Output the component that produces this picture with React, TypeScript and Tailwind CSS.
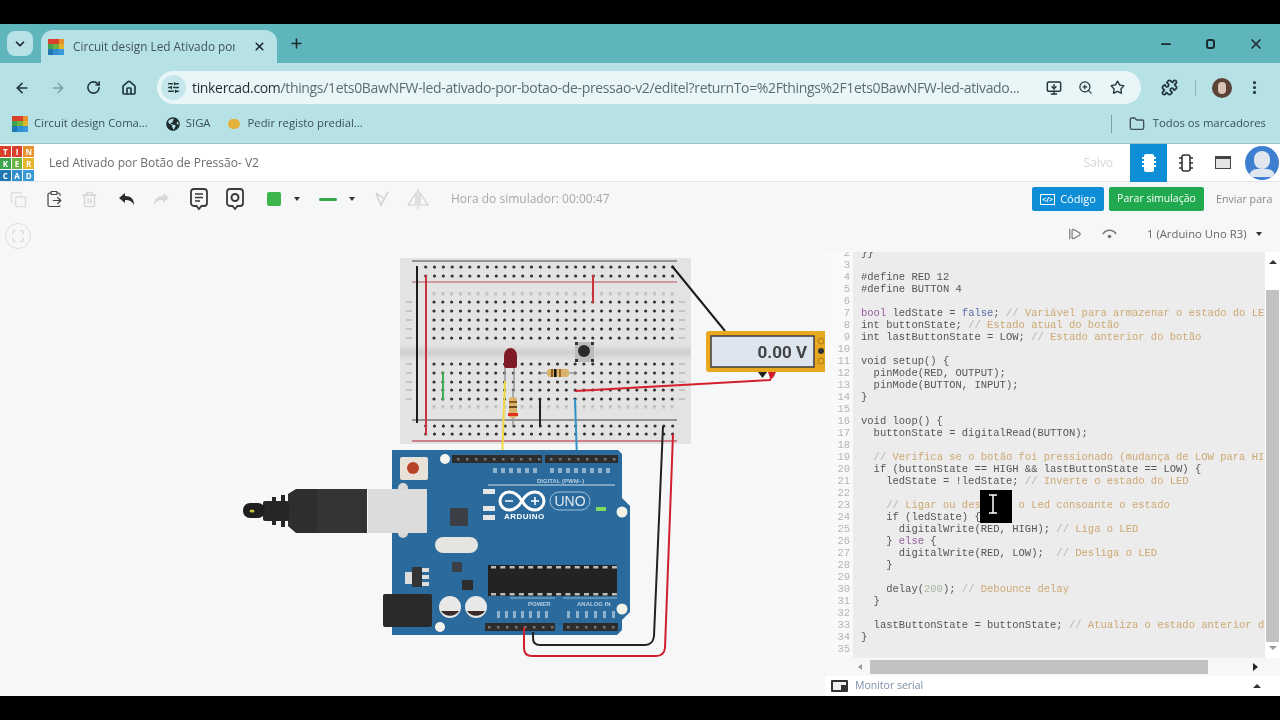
import { ChevronDown, X, Plus, Minus, ArrowLeft, ArrowRight, RotateCw, Home, SlidersHorizontal, Star, ZoomIn, Puzzle, MoreVertical, Folder, Copy, ClipboardPaste, Trash2, MonitorDown, Maximize, StepForward } from "lucide-react";
import { FaGlobeAmericas } from "react-icons/fa";

// Code listing as it shows in the editor, starting at line 2
const CODE = [
  "}}",
  "",
  "#define RED 12",
  "#define BUTTON 4",
  "",
  "bool ledState = false; // Variável para armazenar o estado do LED",
  "int buttonState; // Estado atual do botão",
  "int lastButtonState = LOW; // Estado anterior do botão",
  "",
  "void setup() {",
  "  pinMode(RED, OUTPUT);",
  "  pinMode(BUTTON, INPUT);",
  "}",
  "",
  "void loop() {",
  "  buttonState = digitalRead(BUTTON);",
  "",
  "  // Verifica se o botão foi pressionado (mudança de LOW para HIGH)",
  "  if (buttonState == HIGH && lastButtonState == LOW) {",
  "    ledState = !ledState; // Inverte o estado do LED",
  "",
  "    // Ligar ou desligar o Led consoante o estado",
  "    if (ledState) {",
  "      digitalWrite(RED, HIGH); // Liga o LED",
  "    } else {",
  "      digitalWrite(RED, LOW);  // Desliga o LED",
  "    }",
  "",
  "    delay(200); // Debounce delay",
  "  }",
  "",
  "  lastButtonState = buttonState; // Atualiza o estado anterior do botão",
  "}",
  "",
];

function CodeLine({ text }: { text: string }) {
  const at = text.indexOf("//");
  const code = at >= 0 ? text.slice(0, at) : text;
  const comment = at >= 0 ? text.slice(at + 2) : null;
  const parts = code.split(/\b(bool|false|else|200)\b/);
  return (
    <div className="h-3 leading-3 whitespace-pre">
      {parts.map((p, i) =>
        i % 2 === 1 ? (
          <span key={i} className={p === "200" ? "text-[#a9b7a0]" : p === "false" ? "text-[#5a6fa8]" : "text-[#94609a]"}>
            {p}
          </span>
        ) : (
          <span key={i}>{p}</span>
        ),
      )}
      {comment !== null && (
        <>
          <span className="text-[#b5b5b5]">//</span>
          <span className="text-[#cda873]">{comment}</span>
        </>
      )}
    </div>
  );
}

function TinkercadLogo({ size }: { size: "small" | "large" }) {
  const colors = ["bg-[#d8402c]", "bg-[#d8402c]", "bg-[#e8912c]", "bg-[#3fa34d]", "bg-[#6cb33f]", "bg-[#e3b52c]", "bg-[#1f78b4]", "bg-[#2f8fd0]", "bg-[#3a9ad9]"];
  const letters = "TINKERCAD".split("");
  if (size === "small") {
    return (
      <div className="grid grid-cols-3 w-4 h-4 shrink-0">
        {colors.map((c, i) => (
          <div key={i} className={c} />
        ))}
      </div>
    );
  }
  return (
    <div className="grid grid-cols-3 gap-px w-[34px] h-[34px] shrink-0">
      {letters.map((l, i) => (
        <div key={i} className={`${colors[i]} text-white text-[8px] font-bold leading-[11px] text-center`}>
          {l}
        </div>
      ))}
    </div>
  );
}

function Circuit() {
  const railX = Array.from({ length: 29 }, (_, i) => 425.7 + i * 8.82);
  const mainX = Array.from({ length: 28 }, (_, i) => 434 + i * 8.82);
  const railY = [267, 276, 426, 434];
  const mainY = [302, 311, 320, 329, 338, 364, 373, 382, 390, 399];

  return (
    <svg className="absolute left-0 top-0" width="825" height="480" viewBox="0 216 825 480">
      <defs>
        <linearGradient id="channel" x1="0" y1="0" x2="0" y2="1">
          <stop offset="0" stopColor="#e2e2e2" />
          <stop offset="0.5" stopColor="#cfcfcf" />
          <stop offset="1" stopColor="#e2e2e2" />
        </linearGradient>
      </defs>

      {/* breadboard */}
      <rect x="400" y="258" width="291" height="186" fill="#e3e3e3" />
      <rect x="400" y="345" width="291" height="15" fill="url(#channel)" />
      <line x1="412" y1="261" x2="677" y2="261" stroke="#444" strokeWidth="1.2" />
      <line x1="412" y1="282" x2="677" y2="282" stroke="#b4505a" strokeWidth="1.2" />
      <line x1="412" y1="420" x2="677" y2="420" stroke="#444" strokeWidth="1.2" />
      <line x1="412" y1="441" x2="677" y2="441" stroke="#c4606c" strokeWidth="1.5" />
      {railY.map((y) => railX.map((x) => <circle key={`${x}-${y}`} cx={x} cy={y} r="1.6" fill="#333" />))}
      {mainY.map((y) => mainX.map((x) => <circle key={`${x}-${y}`} cx={x} cy={y} r="1.6" fill="#333" />))}
      {[294, 407].map((y) => mainX.map((x) => <rect key={`${x}-${y}`} x={x - 1.5} y={y - 2} width="3" height="3.5" fill="#c4c4c4" />))}
      {mainY.map((y) => (
        <g key={y}>
          <rect x="406" y={y - 1} width="6" height="2" fill="#c4c4c4" />
          <rect x="679" y={y - 1} width="6" height="2" fill="#c4c4c4" />
        </g>
      ))}

      {/* wires on the board */}
      <line x1="417" y1="266" x2="417" y2="423" stroke="#1c1c1c" strokeWidth="2" />
      <line x1="426" y1="275" x2="426" y2="435" stroke="#c8343c" strokeWidth="2" />
      <line x1="593" y1="275" x2="593" y2="303" stroke="#c8343c" strokeWidth="2" />
      <line x1="443" y1="372" x2="443" y2="400" stroke="#3fae50" strokeWidth="2" />
      <line x1="540" y1="399" x2="540" y2="426" stroke="#222" strokeWidth="2" />
      <line x1="505" y1="381" x2="502" y2="460" stroke="#f0d840" strokeWidth="2" />
      <line x1="575" y1="399" x2="577" y2="460" stroke="#2f93c8" strokeWidth="2" />
      <line x1="672" y1="266" x2="725" y2="331" stroke="#1c1c1c" strokeWidth="2" />

      {/* led */}
      <line x1="505" y1="362" x2="505" y2="381" stroke="#999" strokeWidth="1.5" />
      <line x1="514" y1="362" x2="514" y2="390" stroke="#999" strokeWidth="1.5" />
      <path d="M504 356a6.5 8 0 0 1 13 0v10a2 2 0 0 1-2 2h-9a2 2 0 0 1-2-2z" fill="#7f1a28" />

      {/* resistors */}
      <line x1="513" y1="390" x2="513" y2="426" stroke="#999" strokeWidth="1.5" />
      <rect x="509" y="397" width="8" height="21" rx="3" fill="#d9b36c" />
      <rect x="509" y="401" width="8" height="2" fill="#8a5a20" />
      <rect x="509" y="406" width="8" height="2" fill="#6b4a20" />
      <rect x="508" y="413" width="10" height="3" fill="#e0301e" />
      <line x1="540" y1="373" x2="576" y2="373" stroke="#999" strokeWidth="1.5" />
      <rect x="547" y="369" width="22" height="8" rx="3" fill="#d9b36c" />
      <rect x="551" y="369" width="2" height="8" fill="#8a5a20" />
      <rect x="554" y="369" width="2.5" height="8" fill="#111" />
      <rect x="559" y="369" width="2" height="8" fill="#a06a20" />

      {/* push button */}
      <rect x="575" y="342" width="19" height="20" fill="#bcbcbc" />
      <rect x="575" y="342" width="3" height="3" fill="#333" />
      <rect x="591" y="342" width="3" height="3" fill="#333" />
      <rect x="575" y="359" width="3" height="3" fill="#333" />
      <rect x="591" y="359" width="3" height="3" fill="#333" />
      <circle cx="584" cy="351" r="6" fill="#2b2b2b" />

      {/* multimeter */}
      <rect x="706" y="331" width="130" height="41" rx="3" fill="#e8a820" />
      <rect x="711" y="336" width="103" height="31" fill="#dde6ef" stroke="#3c3c3c" strokeWidth="1.5" />
      <text x="807" y="358" textAnchor="end" fontFamily="Roboto, sans-serif" fontWeight="700" fontSize="17" fill="#444">
        0.00 V
      </text>
      <circle cx="821" cy="341" r="3" fill="none" stroke="#a87c20" />
      <circle cx="821" cy="351" r="3" fill="#333" />
      <circle cx="821" cy="361" r="3" fill="none" stroke="#a87c20" />
      <path d="M758 372h9l-4.5 6z" fill="#222" />
      <path d="M768 372h8l-3 6h-3z" fill="#c8202c" />
      <path d="M575 391L770 380L772 375" fill="none" stroke="#d4202c" strokeWidth="2" />

      {/* arduino board */}
      <path d="M392 450H618L622 454V498L630 506V612L622 620V630L617 635H392z" fill="#2b6a9c" />
      <rect x="452" y="455" width="90" height="8" fill="#2d2d2d" />
      <rect x="545" y="455" width="73" height="8" fill="#2d2d2d" />
      <rect x="485" y="623" width="70" height="8" fill="#2d2d2d" />
      <rect x="563" y="623" width="55" height="8" fill="#2d2d2d" />
      {Array.from({ length: 10 }, (_, i) => 457 + i * 9).map((x) => (
        <rect key={x} x={x} y="458" width="2.5" height="2.5" fill="#777" />
      ))}
      {Array.from({ length: 8 }, (_, i) => 550 + i * 9).map((x) => (
        <rect key={x} x={x} y="458" width="2.5" height="2.5" fill="#777" />
      ))}
      {Array.from({ length: 8 }, (_, i) => 488 + i * 9).map((x) => (
        <rect key={x} x={x} y="626" width="2.5" height="2.5" fill="#777" />
      ))}
      {Array.from({ length: 6 }, (_, i) => 567 + i * 9).map((x) => (
        <rect key={x} x={x} y="626" width="2.5" height="2.5" fill="#777" />
      ))}
      {/* tiny pin labels, too small to read in the recording */}
      {[493, 501, 509, 517, 525, 533, 550, 558, 566, 574, 582, 590, 598, 606].map((x) => (
        <rect key={x} x={x} y="468" width="4" height="5" fill="#8fb3cc" />
      ))}
      {[497, 505, 513, 521, 529, 537, 545, 567, 576, 585, 594, 603, 612].map((x) => (
        <rect key={x} x={x} y="611" width="3" height="7" fill="#8fb3cc" />
      ))}
      <rect x="400" y="457" width="28" height="23" rx="2" fill="#e8e2d8" />
      <circle cx="413" cy="468" r="6" fill="#b8432a" />
      <circle cx="445" cy="459" r="5" fill="#f5f5f0" />
      <circle cx="622" cy="512" r="5.5" fill="#f2f2e6" />
      <circle cx="622" cy="609" r="5.5" fill="#f2f2e6" />
      <circle cx="440" cy="627" r="5" fill="#f5f5f0" />
      <circle cx="403" cy="488" r="5" fill="#d8d8d8" />
      <circle cx="403" cy="533" r="5" fill="#d8d8d8" />

      {/* usb plug */}
      <rect x="368" y="489" width="59" height="44" fill="#dcdcdc" />
      <path d="M288 494L296 489H367V533H296L288 526z" fill="#2e2e2e" />
      <rect x="317" y="489" width="50" height="44" fill="#343434" />
      <rect x="263" y="501" width="26" height="20" rx="2" fill="#262626" />
      <path d="M272 497h4v28h-4zM281 495h4v32h-4z" fill="#262626" />
      <rect x="243" y="503" width="22" height="15" rx="7" fill="#1f1f1f" />
      <ellipse cx="252" cy="511" rx="2.5" ry="1.5" fill="#c8c840" />

      {/* parts */}
      <rect x="450" y="508" width="18" height="18" fill="#3a3f45" />
      <rect x="435" y="537" width="43" height="16" rx="8" fill="#e4e4e0" />
      <rect x="452" y="562" width="10" height="10" rx="1" fill="#3a3f45" />
      <rect x="405" y="572" width="7" height="12" fill="#ddd" />
      <rect x="412" y="567" width="10" height="20" fill="#333" />
      <rect x="422" y="568" width="7" height="4" fill="#ddd" />
      <rect x="422" y="575" width="7" height="4" fill="#ddd" />
      <rect x="422" y="582" width="7" height="4" fill="#ddd" />
      <rect x="462" y="580" width="11" height="10" fill="#2d2d2d" />
      <rect x="488" y="565" width="129" height="31" fill="#232323" />
      {Array.from({ length: 14 }, (_, i) => 491 + i * 9.3).map((x) => (
        <g key={x}>
          <rect x={x} y="566" width="5" height="2.5" fill="#bbb" />
          <rect x={x} y="593" width="5" height="2.5" fill="#bbb" />
        </g>
      ))}
      <rect x="383" y="594" width="49" height="33" rx="2" fill="#2a2a2a" />
      <circle cx="450" cy="607" r="11" fill="#e8e8e8" />
      <path d="M441 611a11 11 0 0 0 18 0z" fill="#3a2a2a" />
      <circle cx="476" cy="607" r="11" fill="#e8e8e8" />
      <path d="M467 611a11 11 0 0 0 18 0z" fill="#3a2a2a" />

      {/* leds and labels */}
      <rect x="483" y="489" width="12" height="5" fill="#e6e6e6" />
      <rect x="483" y="506" width="12" height="5" fill="#e6e6e6" />
      <rect x="483" y="515" width="12" height="5" fill="#e6e6e6" />
      <rect x="596" y="507" width="10" height="4" fill="#7fdc60" />
      <path d="M522 501c-4-7-9-9-13-9a9 9 0 0 0 0 18c4 0 9-2 13-9c4-7 9-9 13-9a9 9 0 0 1 0 18c-4 0-9-2-13-9z" fill="none" stroke="#fff" strokeWidth="3" />
      <line x1="505" y1="501" x2="513" y2="501" stroke="#fff" strokeWidth="1.5" />
      <path d="M531 501h8M535 497v8" stroke="#fff" strokeWidth="1.5" />
      <text x="504" y="519" fontFamily="Liberation Sans, sans-serif" fontWeight="700" fontSize="8" letterSpacing="0.5" fill="#fff">
        ARDUINO
      </text>
      <rect x="550" y="492" width="40" height="18" rx="9" fill="none" stroke="#9fc0d8" />
      <text x="570" y="506" textAnchor="middle" fontFamily="Liberation Sans, sans-serif" fontSize="14" fill="#dfeaf2">
        UNO
      </text>
      <text x="537" y="483" fontFamily="Liberation Sans, sans-serif" fontWeight="700" fontSize="6" fill="#b9cfe0">
        DIGITAL (PWM~)
      </text>
      <line x1="488" y1="485" x2="615" y2="485" stroke="#cfe0ec" />
      <text x="528" y="606" fontFamily="Liberation Sans, sans-serif" fontWeight="700" fontSize="6" fill="#b9cfe0">
        POWER
      </text>
      <text x="577" y="606" fontFamily="Liberation Sans, sans-serif" fontWeight="700" fontSize="6" fill="#b9cfe0">
        ANALOG IN
      </text>
      <line x1="510" y1="598" x2="555" y2="598" stroke="#8fb3cc" />
      <line x1="563" y1="598" x2="617" y2="598" stroke="#8fb3cc" />

      {/* wires to the board */}
      <path d="M663 426L654 636Q653 645 645 645H540Q533 645 533 638V632" fill="none" stroke="#222" strokeWidth="2" />
      <path d="M673 434L665 648Q664 656 656 656H532Q524 656 524 648V627" fill="none" stroke="#d0202c" strokeWidth="2" />
    </svg>
  );
}

export default function App() {
  return (
    <div className="w-[1280px] h-[720px] bg-black flex flex-col overflow-hidden blur-[0.5px] font-['Open_Sans',sans-serif]">
      <div className="h-6 shrink-0" />

      {/* browser tab strip */}
      <div className="h-[39px] shrink-0 bg-[#5fb5bc] flex items-end pl-[7px] text-[#1d2b2e]">
        <div className="w-[26px] h-[25px] mb-[7px] rounded-lg bg-[#b6e1e5] flex items-center justify-center">
          <ChevronDown size={14} strokeWidth={3} />
        </div>
        <div className="ml-2 w-[236px] h-[33px] rounded-t-xl bg-[#b6e1e5] flex items-center pl-[7px] pr-[11px]">
          <TinkercadLogo size="small" />
          <span className="ml-[9px] w-[162px] overflow-hidden whitespace-nowrap text-[11.8px] text-[#40565a]">Circuit design Led Ativado por Botão</span>
          <X size={13} strokeWidth={3} className="ml-auto" />
        </div>
        <Plus size={15} strokeWidth={2.5} className="ml-3 mb-[12px]" />
        <div className="ml-auto flex items-center mb-[11px] pr-4 gap-[33px]">
          <Minus size={14} strokeWidth={3} />
          <div className="w-[9px] h-[10px] rounded-[3px] border-2 border-[#1d2b2e]" />
          <X size={16} strokeWidth={2.5} />
        </div>
      </div>

      {/* address bar */}
      <div className="h-[49px] shrink-0 bg-[#b6e1e5] flex items-center pl-[14px] text-[#22383c]">
        <ArrowLeft size={16} strokeWidth={2.5} />
        <ArrowRight size={16} className="ml-5 text-[#7c9da2]" />
        <RotateCw size={15} strokeWidth={2.5} className="ml-[20px]" />
        <Home size={16} strokeWidth={2.5} className="ml-[20px]" />
        <div className="ml-[20px] w-[984px] h-[33px] rounded-full bg-[#e9f6f7] flex items-center pl-[4px]">
          <div className="w-[25px] h-[25px] rounded-full bg-[#c5e6ea] flex items-center justify-center">
            <SlidersHorizontal size={13} strokeWidth={2.5} />
          </div>
          <span className="ml-[6px] w-[838px] whitespace-nowrap overflow-hidden text-[14px] tracking-[-0.34px] text-[#5a6e72]">
            <span className="text-[#1e2f33]">tinkercad.com</span>/things/1ets0BawNFW-led-ativado-por-botao-de-pressao-v2/editel?returnTo=%2Fthings%2F1ets0BawNFW-led-ativado...
          </span>
          <MonitorDown size={16} strokeWidth={2.2} className="ml-[16px]" />
          <ZoomIn size={15} className="ml-[16px]" />
          <Star size={15} strokeWidth={2.2} className="ml-[17px]" />
        </div>
        <Puzzle size={17} strokeWidth={2.5} className="ml-[20px]" />
        <div className="ml-[17px] w-px h-4 bg-[#8fb5ba]" />
        <div className="ml-[16px] w-[20px] h-[20px] rounded-full bg-[#5c4238] flex items-center justify-center">
          <div className="w-2 h-3 rounded-full bg-[#d8c4b6]" />
        </div>
        <MoreVertical size={17} strokeWidth={2.5} className="ml-[14px]" />
      </div>

      {/* bookmarks */}
      <div className="h-[32px] shrink-0 bg-[#b6e1e5] border-b border-[#9ac3c8] flex items-center pl-[12px] pb-2 text-[11.3px] text-[#3c5256]">
        <TinkercadLogo size="small" />
        <span className="ml-[6px]">Circuit design Coma...</span>
        <FaGlobeAmericas size={14} className="ml-[18px] text-[#1d2b2e]" />
        <span className="ml-[6px]">SIGA</span>
        <div className="ml-[17px] w-[12px] h-[10px] rounded-full bg-[#e3b23c]" />
        <span className="ml-[8px]">Pedir registo predial...</span>
        <div className="ml-auto w-px h-[18px] bg-[#7e9fa4]" />
        <Folder size={16} className="ml-[17px]" />
        <span className="ml-[8px] mr-[14px]">Todos os marcadores</span>
      </div>

      {/* tinkercad header */}
      <div className="h-[38px] shrink-0 bg-white flex items-center border-b border-[#e6e6e6] text-[#6b6b6b]">
        <TinkercadLogo size="large" />
        <span className="ml-[15px] text-[12px]">Led Ativado por Botão de Pressão- V2</span>
        <span className="ml-auto text-[12px] text-[#d6d6d6]">Salvo</span>
        <div className="ml-[17px] w-[37px] h-[38px] bg-[#0d8ed6] flex items-center justify-center">
          <svg width="14" height="20" viewBox="0 0 14 20" fill="#fff">
            <rect x="2" y="1" width="10" height="18" rx="2" />
            <path d="M0 4h2v2H0zM0 8h2v2H0zM0 12h2v2H0zM12 4h2v2h-2zM12 8h2v2h-2zM12 12h2v2h-2z" />
          </svg>
        </div>
        <div className="ml-[11px] w-[16px] flex justify-center">
          <svg width="14" height="20" viewBox="0 0 14 20" fill="none" stroke="#333" strokeWidth="1.6">
            <rect x="3" y="2" width="8" height="16" rx="2" />
            <path d="M0 5h3M0 10h3M0 15h3M11 5h3M11 10h3M11 15h3" />
          </svg>
        </div>
        <div className="ml-[21px] w-[16px] h-[13px] border border-[#444] bg-[#e4e4e4] border-t-[3px]" />
        <div className="ml-[14px] mr-px w-[34px] h-[34px] rounded-full bg-[#3f7fd0] flex flex-col items-center justify-center overflow-hidden">
          <div className="w-[16px] h-[18px] rounded-full bg-[#dfe6ee]" />
          <div className="w-[26px] h-[8px] rounded-t-full bg-[#dfe6ee] -mb-[2px]" />
        </div>
      </div>

      {/* editor area */}
      <div className="flex-1 min-h-0 bg-[#f6f7f9] flex flex-col h-[514px]">
        <div className="h-[34px] shrink-0 flex items-center pl-[10px] text-[#3a3a3a]">
          <Copy size={17} className="text-[#dcdcdc]" />
          <ClipboardPaste size={18} strokeWidth={1.6} className="ml-[18px] text-[#444]" />
          <Trash2 size={17} className="ml-[18px] text-[#d5d5d5]" />
          <svg width="16" height="12" viewBox="0 0 16 12" className="ml-[21px]" fill="#2a2a2a">
            <path d="M6 0L0 5l6 5V7c4 0 7 1 9 5c0-6-3-9-9-9z" />
          </svg>
          <svg width="16" height="12" viewBox="0 0 16 12" className="ml-[18px]" fill="#d9d9d9">
            <path d="M10 0l6 5-6 5V7C6 7 3 8 1 12c0-6 3-9 9-9z" />
          </svg>
          <svg width="18" height="22" viewBox="0 0 18 22" className="ml-[21px]" fill="none" stroke="#3a3a3a" strokeWidth="1.8">
            <path d="M4 1h10a3 3 0 0 1 3 3v11a3 3 0 0 1-3 3h-2.5L9 21l-2.5-3H4a3 3 0 0 1-3-3V4a3 3 0 0 1 3-3z" />
            <path d="M5 6h8M5 9.5h8M5 13h5" strokeWidth="1.4" />
          </svg>
          <svg width="18" height="22" viewBox="0 0 18 22" className="ml-[18px]" fill="none" stroke="#3a3a3a" strokeWidth="1.8">
            <path d="M4 1h10a3 3 0 0 1 3 3v11a3 3 0 0 1-3 3h-2.5L9 21l-2.5-3H4a3 3 0 0 1-3-3V4a3 3 0 0 1 3-3z" />
            <circle cx="9" cy="9.5" r="3.5" strokeWidth="2" />
          </svg>
          <div className="ml-[23px] w-[14px] h-[14px] rounded-[2px] bg-[#3cb54a]" />
          <div className="ml-[13px] w-0 h-0 border-x-[3px] border-x-transparent border-t-[4px] border-t-[#333]" />
          <div className="ml-[19px] w-[18px] h-[3px] rounded-full bg-[#35a845]" />
          <div className="ml-[12px] w-0 h-0 border-x-[3px] border-x-transparent border-t-[4px] border-t-[#333]" />
          <svg width="14" height="16" viewBox="0 0 14 16" className="ml-[20px]" fill="none" stroke="#d0d0d0" strokeWidth="1.5">
            <path d="M1 2l5 12 7-13M1 2l9 6" />
          </svg>
          <svg width="22" height="20" viewBox="0 0 22 20" className="ml-[18px]" fill="none" stroke="#d0d0d0" strokeWidth="1.2">
            <path d="M11 0v20M9 4L1 16h8zM13 4l8 12h-8z" />
          </svg>
          <span className="ml-[22px] text-[12px] text-[#a8a8a8]">Hora do simulador: 00:00:47</span>
          <div className="ml-auto w-[72px] h-[24px] rounded-[2px] bg-[#0d8ed6] flex items-center justify-center gap-[5px] text-[11px] text-white">
            <span className="w-[15px] h-[11px] border border-white text-[7px] leading-[9px] text-center font-bold">&lt;/&gt;</span>
            Código
          </div>
          <div className="ml-[5px] w-[95px] h-[24px] rounded-[2px] bg-[#20a94f] flex items-center justify-center text-[10.5px] text-white">Parar simulação</div>
          <span className="ml-[12px] mr-2 w-[56px] text-[10.7px] whitespace-nowrap text-[#8a8a8a]">Enviar para</span>
        </div>

        <div className="flex-1 min-h-0 flex">
          <div className="relative flex-1 overflow-hidden">
            <div className="w-[26px] h-[26px] ml-[5px] mt-[7px] rounded-full border border-[#dcdcdc] flex items-center justify-center">
              <Maximize size={14} className="text-[#d4d4d4]" />
            </div>
            <Circuit />
          </div>

          {/* code panel */}
          <div className="w-[455px] shrink-0 flex flex-col">
            <div className="h-[36px] shrink-0 flex items-center text-[#666] text-[11.3px]">
              <StepForward size={14} className="ml-[243px] text-[#777]" />
              <svg width="15" height="12" viewBox="0 0 15 12" className="ml-[20px]" fill="none" stroke="#777" strokeWidth="1.6">
                <path d="M1 6a7.5 7.5 0 0 1 13 0" />
                <circle cx="7.5" cy="8.5" r="1.8" fill="#777" stroke="none" />
              </svg>
              <span className="ml-[30px]">1 (Arduino Uno R3)</span>
              <div className="ml-[9px] w-0 h-0 border-x-[3px] border-x-transparent border-t-[4px] border-t-[#333]" />
            </div>

            <div className="relative flex-1 min-h-0 flex bg-white overflow-hidden">
              <div className="w-[28px] shrink-0 bg-[#f9f9f9] pr-[3px] -mt-[5px] font-['Liberation_Mono',monospace] text-[10.5px] text-right text-[#b4b4b4]">
                {CODE.map((_, i) => (
                  <div key={i} className="h-3 leading-3">
                    {i + 2}
                  </div>
                ))}
              </div>
              <div className="w-[412px] shrink-0 bg-[#ececec] pl-2 -mt-[5px] overflow-hidden font-['Liberation_Mono',monospace] text-[10.5px] text-[#555]">
                {CODE.map((l, i) => (
                  <CodeLine key={i} text={l} />
                ))}
              </div>
              <div className="w-[15px] shrink-0 bg-white flex flex-col items-center">
                <div className="mt-2 w-0 h-0 border-x-[4px] border-x-transparent border-b-[4px] border-b-[#333]" />
                <div className="mt-[26px] w-[13px] h-[352px] bg-[#c2c2c2]" />
                <div className="mt-1 w-0 h-0 border-x-[4px] border-x-transparent border-t-[4px] border-t-[#999]" />
              </div>
              {/* mouse cursor from the recording */}
              <div className="absolute left-[155px] top-[238px] w-[32px] h-[33px] bg-black flex items-center justify-center">
                <svg width="10" height="20" viewBox="0 0 10 20" fill="none" stroke="#fff" strokeWidth="1.5" className="-ml-[7px] -mt-[5px]">
                  <path d="M1 1h8M1 19h8M5 1v18" />
                </svg>
              </div>
            </div>

            <div className="h-[18px] shrink-0 bg-[#f7f7f7] flex items-center">
              <div className="ml-[33px] w-0 h-0 border-y-[3px] border-y-transparent border-r-[4px] border-r-[#999]" />
              <div className="ml-[8px] w-[338px] h-[14px] bg-[#c2c2c2]" />
              <div className="ml-[45px] w-0 h-0 border-y-[4px] border-y-transparent border-l-[5px] border-l-[#222]" />
            </div>

            <div className="h-[20px] shrink-0 bg-white flex items-center text-[10.5px] text-[#7d90a8]">
              <div className="ml-[6px] w-[17px] h-[12px] border-2 border-[#333] rounded-[1px] bg-[#eee] flex justify-end items-end">
                <div className="w-[5px] h-[5px] bg-[#333]" />
              </div>
              <span className="ml-[7px]">Monitor serial</span>
              <div className="ml-auto mr-[19px] w-0 h-0 border-x-[4px] border-x-transparent border-b-[4px] border-b-[#333]" />
            </div>
          </div>
        </div>
      </div>

      <div className="h-6 shrink-0" />
    </div>
  );
}
